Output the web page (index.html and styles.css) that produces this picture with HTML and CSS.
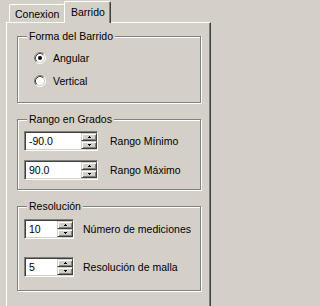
FILE: index.html
```html
<!DOCTYPE html>
<html lang="es">
<head>
<meta charset="utf-8">
<title>Barrido</title>
<link rel="stylesheet" href="styles.css">
</head>
<body>
<div class="window">
  <div class="tabs">
    <div class="tab">Conexion</div>
    <div class="tab tab-active">Barrido</div>
  </div>
  <div class="panel">
    <fieldset class="group">
      <legend>Forma del Barrido</legend>
      <div class="rows rows-forma">
        <div class="radio-row">
          <svg class="radio" width="12" height="12" viewBox="0 0 12 12">
            <circle cx="6" cy="6" r="4.5" fill="#fff"/>
            <path d="M2.11 9.89A5.5 5.5 0 0 1 9.89 2.11" stroke="#808080" fill="none"/>
            <path d="M9.89 2.11A5.5 5.5 0 0 1 2.11 9.89" stroke="#fff" fill="none"/>
            <path d="M2.82 9.18A4.5 4.5 0 0 1 9.18 2.82" stroke="#404040" fill="none"/>
            <path d="M9.18 2.82A4.5 4.5 0 0 1 2.82 9.18" stroke="#d4d0c8" fill="none"/>
            <circle cx="6" cy="6" r="2" fill="#000"/>
          </svg>
          <span>Angular</span>
        </div>
        <div class="radio-row">
          <svg class="radio" width="12" height="12" viewBox="0 0 12 12">
            <circle cx="6" cy="6" r="4.5" fill="#fff"/>
            <path d="M2.11 9.89A5.5 5.5 0 0 1 9.89 2.11" stroke="#808080" fill="none"/>
            <path d="M9.89 2.11A5.5 5.5 0 0 1 2.11 9.89" stroke="#fff" fill="none"/>
            <path d="M2.82 9.18A4.5 4.5 0 0 1 9.18 2.82" stroke="#404040" fill="none"/>
            <path d="M9.18 2.82A4.5 4.5 0 0 1 2.82 9.18" stroke="#d4d0c8" fill="none"/>
          </svg>
          <span>Vertical</span>
        </div>
      </div>
    </fieldset>

    <fieldset class="group">
      <legend>Rango en Grados</legend>
      <div class="rows rows-rango">
        <div class="field">
          <div class="spin">
            <span class="spin-value">-90.0</span>
            <div class="updown">
              <div class="ud-btn"><svg width="3" height="2" viewBox="0 0 3 2"><path d="M1 0h1v1h1v1H0V1h1z"/></svg></div>
              <div class="ud-btn"><svg width="3" height="2" viewBox="0 0 3 2"><path d="M0 0h3v1H2v1H1V1H0z"/></svg></div>
            </div>
          </div>
          <span class="field-label">Rango Mínimo</span>
        </div>
        <div class="field">
          <div class="spin">
            <span class="spin-value">90.0</span>
            <div class="updown">
              <div class="ud-btn"><svg width="3" height="2" viewBox="0 0 3 2"><path d="M1 0h1v1h1v1H0V1h1z"/></svg></div>
              <div class="ud-btn"><svg width="3" height="2" viewBox="0 0 3 2"><path d="M0 0h3v1H2v1H1V1H0z"/></svg></div>
            </div>
          </div>
          <span class="field-label">Rango Máximo</span>
        </div>
      </div>
    </fieldset>

    <fieldset class="group">
      <legend>Resolución</legend>
      <div class="rows rows-res">
        <div class="field">
          <div class="spin spin-sm">
            <span class="spin-value">10</span>
            <div class="updown">
              <div class="ud-btn"><svg width="3" height="2" viewBox="0 0 3 2"><path d="M1 0h1v1h1v1H0V1h1z"/></svg></div>
              <div class="ud-btn"><svg width="3" height="2" viewBox="0 0 3 2"><path d="M0 0h3v1H2v1H1V1H0z"/></svg></div>
            </div>
          </div>
          <span class="field-label field-label-sm">Número de mediciones</span>
        </div>
        <div class="field">
          <div class="spin spin-sm">
            <span class="spin-value">5</span>
            <div class="updown">
              <div class="ud-btn"><svg width="3" height="2" viewBox="0 0 3 2"><path d="M1 0h1v1h1v1H0V1h1z"/></svg></div>
              <div class="ud-btn"><svg width="3" height="2" viewBox="0 0 3 2"><path d="M0 0h3v1H2v1H1V1H0z"/></svg></div>
            </div>
          </div>
          <span class="field-label field-label-sm">Resolución de malla</span>
        </div>
      </div>
    </fieldset>
  </div>
</div>
</body>
</html>
```

FILE: styles.css
```css
html, body {
  margin: 0;
  padding: 0;
  overflow: hidden;
  background: #d4d0c8;
}

body {
  font-family: "Liberation Sans", Arial, sans-serif;
  font-size: 10.5px;
  color: #000;
}

.tabs {
  display: flex;
  align-items: flex-end;
  height: 22px;
  padding-left: 9px;
}

.tab {
  box-sizing: border-box;
  height: 18px;
  width: 57px;
  padding: 3px 0 0 5px;
  line-height: 13px;
  border-top: 1px solid #fff;
  border-left: 1px solid #fff;
  border-right: 1px solid #404040;
  border-radius: 2px 2px 0 0;
  box-shadow: inset -1px 0 0 #808080;
  background: #d4d0c8;
  white-space: nowrap;
}

.tab-active {
  position: relative;
  z-index: 1;
  height: 22px;
  width: 47px;
  margin-left: -2px;
  margin-bottom: -1px;
  padding: 4px 0 0 6px;
}

.panel {
  box-sizing: border-box;
  width: 205px;
  height: 300px;
  margin-left: 6px;
  padding: 7px 9px 0 10px;
  border: 1px solid;
  border-color: #fff #404040 #404040 #fff;
  box-shadow: inset -1px -1px 0 #808080;
}

.group {
  margin: 0 0 10px;
  padding: 0;
  min-width: 0;
  border: 1px solid #808080;
  box-shadow: inset 1px 1px 0 #fff, 1px 1px 0 #fff;
}

.group legend {
  margin-left: 9px;
  padding: 0 2px;
  line-height: 13px;
  background: #d4d0c8;
}

.rows {
  display: flex;
  flex-direction: column;
}

.rows-forma {
  padding: 9px 0 15px 16px;
  gap: 11px;
}

.rows-rango {
  padding: 5px 0 9px 6px;
  gap: 9px;
}

.rows-res {
  padding: 6px 0 13px 6px;
  gap: 18px;
}

.radio-row {
  display: flex;
  align-items: center;
  height: 12px;
  line-height: 12px;
}

.radio {
  display: block;
  flex-shrink: 0;
  margin-right: 7px;
}

.field {
  display: flex;
  align-items: center;
}

.spin {
  box-sizing: border-box;
  display: flex;
  width: 74px;
  height: 20px;
  padding: 1px 0 1px 1px;
  border: 1px solid;
  border-color: #808080 #fff #fff #808080;
  box-shadow: inset 1px 1px 0 #404040, inset -1px -1px 0 #d4d0c8;
  background: #fff;
}

.spin-sm {
  width: 50px;
}

.spin-value {
  flex: 1;
  padding-left: 3px;
  line-height: 16px;
  white-space: nowrap;
}

.updown {
  display: flex;
  flex-direction: column;
  width: 16px;
}

.ud-btn {
  box-sizing: border-box;
  display: flex;
  align-items: center;
  justify-content: center;
  height: 8px;
  border: 1px solid;
  border-color: #d4d0c8 #404040 #404040 #d4d0c8;
  box-shadow: inset 1px 1px 0 #fff, inset -1px -1px 0 #808080;
  background: #d4d0c8;
}

.ud-btn svg {
  display: block;
  fill: #000;
}

.field-label {
  margin-left: 12px;
  line-height: 13px;
  white-space: nowrap;
}

.field-label-sm {
  margin-left: 9px;
}
```
